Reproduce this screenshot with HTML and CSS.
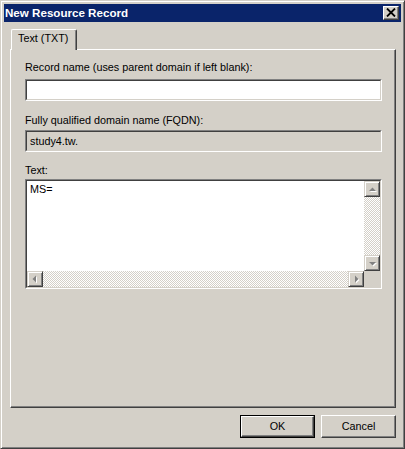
FILE: index.html
```html
<!DOCTYPE html>
<html>
<head>
<meta charset="utf-8">
<link rel="stylesheet" href="styles.css">
</head>
<body>
<div class="window">
  <div class="titlebar">
    <span class="title">New Resource Record</span>
    <div class="close">
      <svg width="10" height="9" viewBox="0 0 10 9"><path d="M1 0.5 L9 8.5 M9 0.5 L1 8.5" stroke="#000" stroke-width="1.8" fill="none"/></svg>
    </div>
  </div>
  <div class="body">
    <div class="tabs"><div class="tab">Text (TXT)</div></div>
    <div class="panel">
      <div class="lbl lbl-first">Record name (uses parent domain if left blank):</div>
      <div class="sunken field-wrap"><div class="inner field"></div></div>
      <div class="lbl lbl-second">Fully qualified domain name (FQDN):</div>
      <div class="sunken field-wrap"><div class="inner field disabled">study4.tw.</div></div>
      <div class="lbl lbl-third">Text:</div>
      <div class="sunken textbox-wrap">
        <div class="inner textbox">
          <div class="text-content">MS=</div>
          <div class="vscroll">
            <div class="sbtn"><svg width="14" height="14" viewBox="0 0 14 14"><polygon points="4,9 11,9 7.5,5.5" fill="#fff" transform="translate(1,1)"/><polygon points="4,9 11,9 7.5,5.5" fill="#808080"/></svg></div>
            <div class="track"></div>
            <div class="sbtn"><svg width="14" height="14" viewBox="0 0 14 14"><polygon points="4,6 11,6 7.5,9.5" fill="#fff" transform="translate(1,1)"/><polygon points="4,6 11,6 7.5,9.5" fill="#808080"/></svg></div>
          </div>
          <div class="hscroll">
            <div class="sbtn"><svg width="14" height="14" viewBox="0 0 14 14"><polygon points="8,3.5 8,10.5 4.5,7" fill="#fff" transform="translate(1,1)"/><polygon points="8,3.5 8,10.5 4.5,7" fill="#808080"/></svg></div>
            <div class="track"></div>
            <div class="sbtn"><svg width="14" height="14" viewBox="0 0 14 14"><polygon points="6,3.5 6,10.5 9.5,7" fill="#fff" transform="translate(1,1)"/><polygon points="6,3.5 6,10.5 9.5,7" fill="#808080"/></svg></div>
          </div>
          <div class="corner"></div>
        </div>
      </div>
    </div>
    <div class="buttons">
      <div class="btn default"><div class="btn-face">OK</div></div>
      <div class="btn"><div class="btn-face">Cancel</div></div>
    </div>
  </div>
</div>
</body>
</html>
```

FILE: styles.css
```css
html, body {
  margin: 0;
  padding: 0;
  background: #d4d0c8;
}

body {
  font-family: "Liberation Sans", Arial, sans-serif;
  font-size: 10.8px;
  color: #000;
}

.window {
  width: 405px;
  height: 449px;
  box-sizing: border-box;
  background: #d4d0c8;
  border: 1px solid;
  border-color: #d4d0c8 #404040 #404040 #d4d0c8;
  box-shadow: inset 1px 1px #fff, inset -1px -1px #808080;
  padding: 3px;
  display: flex;
  flex-direction: column;
}

.titlebar {
  height: 18px;
  background: #0a246a;
  display: flex;
  align-items: center;
  justify-content: space-between;
  padding: 0 2px 0 1px;
}

.title {
  color: #fff;
  font-weight: bold;
  font-size: 11.6px;
  line-height: 18px;
}

.close {
  width: 16px;
  height: 14px;
  box-sizing: border-box;
  background: #d4d0c8;
  border: 1px solid;
  border-color: #fff #404040 #404040 #fff;
  box-shadow: inset -1px -1px #808080;
  display: flex;
  align-items: center;
  justify-content: center;
  padding: 0 1px 1px 0;
}

.close svg {
  display: block;
}

.body {
  flex: 1;
  display: flex;
  flex-direction: column;
}

.tabs {
  height: 20px;
  margin-top: 7px;
  padding-left: 7px;
  display: flex;
}

.tab {
  height: 21px;
  box-sizing: border-box;
  width: 66px;
  border-top: 1px solid #fff;
  border-left: 1px solid #fff;
  border-right: 1px solid #404040;
  border-top-left-radius: 2px;
  border-top-right-radius: 2px;
  box-shadow: inset -1px 0 #808080;
  background: #d4d0c8;
  position: relative;
  z-index: 1;
  padding-left: 6px;
  line-height: 17px;
}

.panel {
  height: 359px;
  box-sizing: border-box;
  margin: 0 5px 0 6px;
  border: 1px solid;
  border-color: #fff #404040 #404040 #fff;
  box-shadow: inset -1px -1px #808080;
  padding: 10px 13px 0 14px;
  display: flex;
  flex-direction: column;
}

.lbl {
  line-height: 14px;
  height: 14px;
}

.lbl-first {
  margin-bottom: 5px;
}

.lbl-second {
  margin-top: 12px;
  margin-bottom: 3px;
}

.lbl-third {
  margin-top: 11px;
  margin-bottom: 2px;
}

.sunken {
  border: 1px solid;
  border-color: #808080 #fff #fff #808080;
}

.sunken > .inner {
  border: 1px solid;
  border-color: #404040 #d4d0c8 #d4d0c8 #404040;
}

.field-wrap {
  height: 22px;
  box-sizing: border-box;
}

.field {
  height: 18px;
  background: #fff;
  line-height: 18px;
  padding-left: 3px;
}

.field.disabled {
  background: #d4d0c8;
}

.textbox-wrap {
  height: 110px;
  box-sizing: border-box;
}

.textbox {
  height: 106px;
  display: grid;
  grid-template-columns: 1fr 16px;
  grid-template-rows: 1fr 16px;
  background: #fff;
}

.text-content {
  padding: 2px 0 0 3px;
  line-height: 13px;
}

.vscroll {
  display: flex;
  flex-direction: column;
}

.hscroll {
  display: flex;
}

.track {
  flex: 1;
  background-color: #d4d0c8;
  background-image: conic-gradient(#fff 25%, #d4d0c8 0 50%, #fff 0 75%, #d4d0c8 0);
  background-size: 2px 2px;
}

.sbtn {
  width: 16px;
  height: 16px;
  box-sizing: border-box;
  background: #d4d0c8;
  border: 1px solid;
  border-color: #d4d0c8 #404040 #404040 #d4d0c8;
  box-shadow: inset 1px 1px #fff, inset -1px -1px #808080;
  flex: none;
}

.sbtn svg {
  display: block;
}

.corner {
  background: #d4d0c8;
}

.buttons {
  display: flex;
  justify-content: flex-end;
  gap: 6px;
  margin: 7px 5px 0 0;
}

.btn {
  width: 75px;
  height: 23px;
  box-sizing: border-box;
  border: 1px solid;
  border-color: #fff #404040 #404040 #fff;
  box-shadow: inset -1px -1px #808080;
  display: flex;
}

.btn-face {
  flex: 1;
  text-align: center;
  line-height: 20px;
}

.btn.default {
  border: 1px solid #000;
  box-shadow: none;
}

.btn.default .btn-face {
  border: 1px solid;
  border-color: #fff #404040 #404040 #fff;
  box-shadow: inset -1px -1px #808080;
  line-height: 18px;
}
```
